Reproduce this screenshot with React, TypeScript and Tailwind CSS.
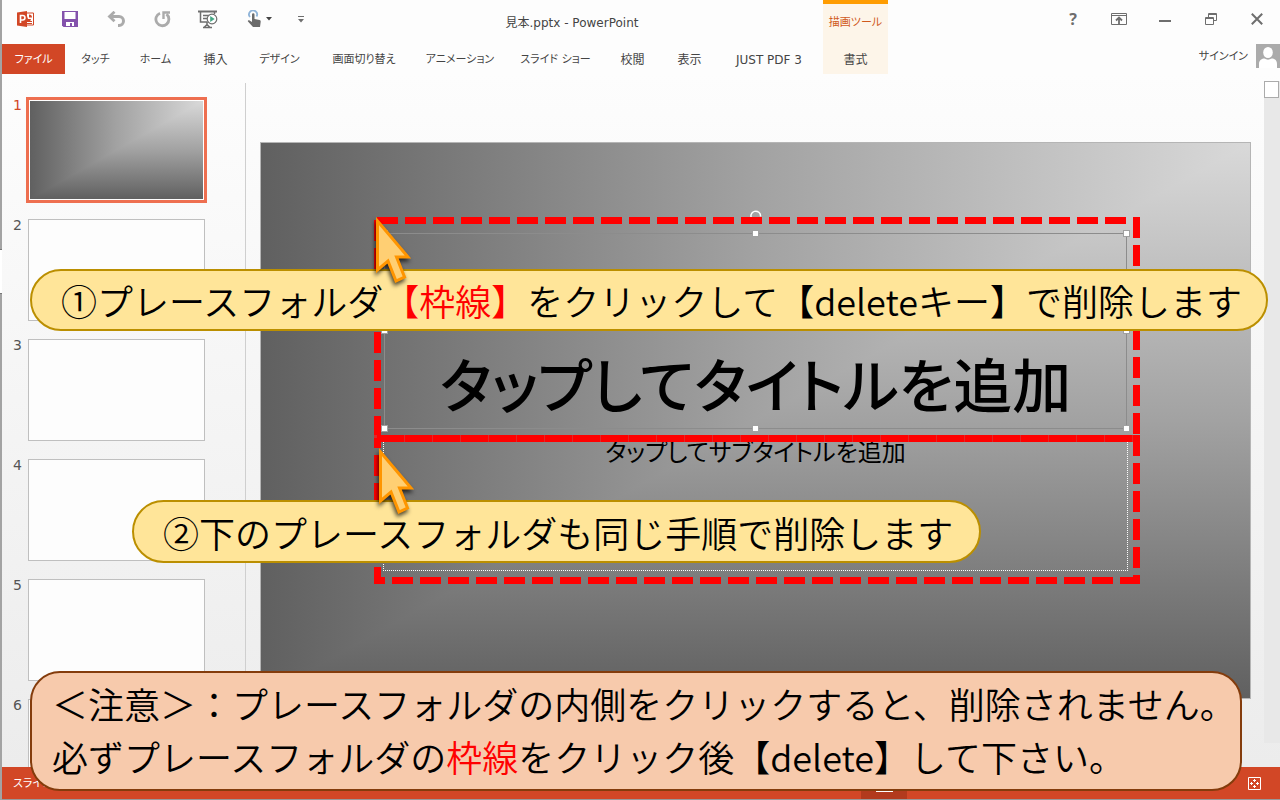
const quickButton = 'flex h-9 w-[46px] items-center justify-center';
const windowButton = 'flex h-9 w-[46px] items-center justify-center text-[#6e6e6e]';
const calloutText = "font-['Noto_Sans_CJK_JP',sans-serif] text-4xl font-[350] whitespace-nowrap text-black";
const slideFill =
  'bg-[linear-gradient(to_right,#606060,#a2a2a2_50%,#d9d9d9),linear-gradient(to_bottom,#d9d9d9,#a2a2a2_50%,#606060)] bg-blend-darken';

const tabs = [
  { label: 'タッチ', size: 'w-[57px] text-[11px]' },
  { label: 'ホーム', size: 'w-[63px] text-[11px]' },
  { label: '挿入', size: 'w-[57px] text-xs' },
  { label: 'デザイン', size: 'w-[71px] text-[11px]' },
  { label: '画面切り替え', size: 'w-[98px] text-[11px]' },
  { label: 'アニメーション', size: 'w-[94px] text-[11px]' },
  { label: 'スライド ショー', size: 'w-[97px] text-[11px]' },
  { label: '校閲', size: 'w-[57px] text-xs' },
  { label: '表示', size: 'w-[57px] text-xs' },
  { label: 'JUST PDF 3', size: 'w-[102px] text-xs' },
];

const slides = [1, 2, 3, 4, 5, 6];

const handles = [
  '-left-1 -top-1',
  'left-1/2 -ml-1 -top-1',
  '-right-1 -top-1',
  '-left-1 top-1/2 -mt-1',
  '-right-1 top-1/2 -mt-1',
  '-left-1 -bottom-1',
  'left-1/2 -ml-1 -bottom-1',
  '-right-1 -bottom-1',
];

function PowerPointIcon() {
  return (
    <svg width="17" height="16" viewBox="0 0 17 16">
      <path d="M9 2h7.500v12H9z" fill="#fff" stroke="#d24726" />
      <path d="M12 3.500v3h3a3 3 0 0 0-3-3zM10 5a3 3 0 1 0 4 3h-3z" fill="#d24726" />
      <path d="M9 10.500h6M9 12.500h6" stroke="#d24726" />
      <path d="M0 1.500 10 0v16L0 14.500z" fill="#d24726" />
      <path d="M3.500 12V4.500h2.200a2 2 0 0 1 0 4.500H3.500" fill="none" stroke="#fff" strokeWidth="1.600" />
    </svg>
  );
}

function SaveIcon() {
  return (
    <svg width="16" height="16" viewBox="0 0 16 16">
      <path d="M0 0h16v16H1.500L0 14.500z" fill="#8452ac" />
      <path d="M2.500 1h11v7h-11zM4 11h8v4h-2v-3H8v3H4z" fill="#fff" />
    </svg>
  );
}

function UndoIcon() {
  return (
    <svg width="19" height="16" viewBox="0 0 19 16" fill="none" stroke="#ababab">
      <path d="M3 5.500h9a4.500 4.500 0 0 1 0 9h-1" strokeWidth="3" />
      <path d="M7.500.8 2.500 5.500l5 4.700" strokeWidth="2.800" />
    </svg>
  );
}

function RepeatIcon() {
  return (
    <svg width="17" height="17" viewBox="0 0 17 17" fill="none" stroke="#ababab">
      <path d="M6 2.200a6.500 6.500 0 1 0 6.500 1" strokeWidth="2.800" />
      <path d="M9.500 8V1.500H16" strokeWidth="2.400" />
    </svg>
  );
}

function SlideShowIcon() {
  return (
    <svg width="20" height="19" viewBox="0 0 20 19" fill="none" stroke="#6e6e6e">
      <path d="M0 1.500h19" strokeWidth="2" />
      <path d="M2.500 2v10h7M16.500 2v2M5 5.500h6M5 8.500h4" strokeWidth="1.500" />
      <path d="M9 12v3M6 17.500l3-3 3 3M5 17.500h9" strokeWidth="1.500" />
      <circle cx="14" cy="9" r="4.800" fill="#fff" strokeWidth="1.200" />
      <path d="m12.200 6 4.500 3-4.500 3z" fill="#45a785" stroke="none" />
    </svg>
  );
}

function TouchIcon() {
  return (
    <svg width="15" height="18" viewBox="0 0 15 18">
      <path d="M3 7a4 4 0 1 1 6.500-.5" fill="none" stroke="#8fb4d9" strokeWidth="1.800" />
      <path
        d="M5 4.500a1.200 1.200 0 0 1 2.500 0V9l5 1c1 .2 1.300.8 1.200 1.700L13 17H6L1 11.500c-.6-.8.300-1.600 1.200-1.200L5 12z"
        fill="#6b6b6b"
      />
    </svg>
  );
}

function CursorArrow() {
  return (
    <svg
      width="44"
      height="72"
      viewBox="0 0 44 72"
      className="drop-shadow-[-1px_3px_2px_rgba(0,0,0,0.7)]"
    >
      <path
        d="M5.500 5 36 41H24.500l8 20-8.500 4-8-20L5.500 54z"
        fill="#ffcf73"
        stroke="#ff9500"
        strokeWidth="3"
      />
    </svg>
  );
}

// Dashed frames around the title and the subtitle placeholder
function PlaceholderFrames() {
  return (
    <svg
      width="768"
      height="368"
      viewBox="0 0 768 368"
      fill="none"
      stroke="#ff0000"
      strokeWidth="7"
      strokeDasharray="21 7"
      className="pointer-events-none absolute left-[112px] top-[73px]"
    >
      <path d="M4 4.500h760" />
      <path d="M4.500 4v218" />
      <path d="M763.500 1v220" />
      <path d="M1 222.500h762" stroke="#e02828" strokeDasharray="none" />
      <path d="M4 222.500h756" strokeDasharray="27 1" />
      <path d="M4.500 222v145" strokeDashoffset="11" />
      <path d="M763.500 219v149" />
      <path d="M1 364.500h766" strokeDashoffset="10" />
    </svg>
  );
}

function TitleBar() {
  return (
    <div className="flex h-11">
      <div className="flex w-[319px] shrink-0 pl-px pt-px">
        <button className="flex h-9 w-11 items-center justify-center" aria-label="PowerPoint">
          <PowerPointIcon />
        </button>
        <button className={quickButton} aria-label="上書き保存">
          <SaveIcon />
        </button>
        <button className={quickButton} aria-label="元に戻す">
          <UndoIcon />
        </button>
        <button className={quickButton} aria-label="繰り返し">
          <RepeatIcon />
        </button>
        <button className={quickButton} aria-label="先頭から開始">
          <SlideShowIcon />
        </button>
        <button className="flex h-9 w-14 items-center justify-center gap-1" aria-label="タッチ/マウス モードの切り替え">
          <TouchIcon />
          <svg width="6" height="4" viewBox="0 0 6 4">
            <path d="M0 0h6L3 3.500z" fill="#444" />
          </svg>
        </button>
        <button className="flex h-9 w-7 items-center justify-center" aria-label="クイック アクセス ツール バーのユーザー設定">
          <svg width="6" height="7" viewBox="0 0 6 7">
            <path d="M0 .5h6" stroke="#6e6e6e" />
            <path d="M0 3h6L3 6.500z" fill="#6e6e6e" />
          </svg>
        </button>
      </div>
      <h1 className="w-[502px] shrink-0 pt-3 text-center text-xs leading-[22px] text-[#444]">
        見本.pptx - PowerPoint
      </h1>
      <div className="w-[65px] shrink-0 whitespace-nowrap border-t-4 border-[#ff9c00] bg-[#fdf5e9] pt-2 text-center text-[11px] leading-[22px] text-[#d0591c]">
        描画ツール
      </div>
      <div className="flex flex-1 justify-end pt-px">
        <button className={windowButton} aria-label="ヘルプ">
          <span className="font-['Noto_Sans'] text-base font-bold">?</span>
        </button>
        <button className={windowButton} aria-label="リボンの表示オプション">
          <svg width="16" height="12" viewBox="0 0 16 12" fill="none" stroke="currentColor">
            <path d="M.5.500h15v11H.5zM.5 2.500h15" />
            <path d="M8 11V5M5 7.500l3-3 3 3" strokeWidth="1.800" />
          </svg>
        </button>
        <button className={windowButton} aria-label="最小化">
          <svg width="12" height="8" viewBox="0 0 12 8">
            <path d="M0 6h12" stroke="currentColor" strokeWidth="2" />
          </svg>
        </button>
        <button className={windowButton} aria-label="元のサイズに戻す">
          <svg width="12" height="12" viewBox="0 0 12 12" fill="none" stroke="currentColor">
            <path d="M.5 4.500h8v7h-8zM0 5.500h9M3.500 4V.5h8v7H9M3 1.500h9" />
          </svg>
        </button>
        <button className={windowButton} aria-label="閉じる">
          <svg width="12" height="12" viewBox="0 0 12 12" fill="none" stroke="currentColor" strokeWidth="2">
            <path d="m.8.8 10.400 10.400M11.200.8.8 11.200" />
          </svg>
        </button>
      </div>
    </div>
  );
}

function RibbonTabs() {
  return (
    <nav className="flex h-[30px] text-[#444]">
      <button className="w-[63px] shrink-0 bg-[#d24726] pt-0.5 text-[11px] text-white">ファイル</button>
      <div className="flex w-[758px] shrink-0 pl-0.5 pt-0.5">
        {tabs.map((tab) => (
          <button key={tab.label} className={`${tab.size} shrink-0 whitespace-nowrap`}>
            {tab.label}
          </button>
        ))}
      </div>
      <button className="w-[65px] shrink-0 bg-[#fdf5e9] pt-0.5 text-xs">書式</button>
      <div className="flex flex-1 items-start justify-end gap-2">
        <a href="#" className="text-[11px] leading-[26px]">
          サインイン
        </a>
        <svg width="24" height="24" viewBox="0 0 24 24" className="bg-[#ababab]">
          <ellipse cx="12" cy="8.500" rx="4.800" ry="5.500" fill="#fff" />
          <path d="M3 24v-4c0-4 3-5.500 5.500-5.500 2 1.500 5 1.500 7 0 3 0 5.500 1.500 5.500 5.500v4z" fill="#fff" />
        </svg>
      </div>
    </nav>
  );
}

function ThumbnailPane() {
  return (
    <aside className="mt-[9px] w-[244px] shrink-0 overflow-hidden border-r border-[#cfcfcf] pt-4">
      <ol>
        {slides.map((n) => (
          <li key={n} className="flex h-[120px] gap-1.5">
            <span
              className={`w-5 text-right text-sm leading-3 ${n === 1 ? 'text-[#d24726]' : 'text-[#555]'}`}
            >
              {n}
            </span>
            {n === 1 ? (
              <div className="-ml-0.5 -mt-0.5 h-[106px] w-[181px] border-[3px] border-[#ee6f50] bg-white p-px">
                <div className={`h-full ${slideFill}`} />
              </div>
            ) : (
              <div className="h-[102px] w-[177px] border border-[#bfbfbf] bg-[#fdfdfd]" />
            )}
          </li>
        ))}
      </ol>
    </aside>
  );
}

function Slide() {
  return (
    <section className={`relative aspect-[991/557] w-full border border-[#b5b5b5] pt-[90px] ${slideFill}`}>
      <div className="relative mx-[123px] flex h-[196px] items-end justify-center border border-[#8c8c8c]">
        <h2 className="whitespace-nowrap text-[59px] font-medium leading-[80px] text-black">
          タップしてタイトルを追加
        </h2>
        <svg width="12" height="20" viewBox="0 0 12 20" className="absolute -top-6 left-1/2 -ml-1.5">
          <path d="M2 9a4.800 4.800 0 1 1 8.500-2.500" fill="none" stroke="#fff" strokeWidth="1.500" />
        </svg>
        {handles.map((place) => (
          <span key={place} className={`absolute size-[7px] border border-[#a0a0a0] bg-white ${place}`} />
        ))}
      </div>
      <div className="mx-[122px] mt-2 h-[134px] border border-dotted border-white text-center">
        <p className="whitespace-nowrap text-2xl leading-[30px] text-black">タップしてサブタイトルを追加</p>
      </div>
      <PlaceholderFrames />
    </section>
  );
}

function ScrollBar() {
  return (
    <div className="mb-6 mt-[7px] w-4 shrink-0 bg-[#e8e8e8]">
      <div className="h-[17px] w-[15px] border border-[#ababab] bg-white" />
    </div>
  );
}

function StatusBar() {
  return (
    <footer className="flex h-[33px] shrink-0 items-center border-b border-[#999] bg-[#d24726] text-[11px] text-white">
      <span className="flex-1 pl-[11px] pt-0.5">スライド</span>
      <button className="flex h-full w-[46px] items-end justify-center bg-[#b23a1d] pb-[7px]" aria-label="標準">
        <span className="h-px w-[17px] bg-white" />
      </button>
      <div className="flex w-[373px] justify-end pr-[19px]">
        <button aria-label="ウィンドウのサイズに合わせる">
          <svg width="13" height="13" viewBox="0 0 13 13" fill="none" stroke="#fff">
            <path d="M.5.500h12v12H.5zM6.500 2v3M5 3.500h3M6.500 8v3M5 9.500h3M2 6.500h3M3.500 5v3M8 6.500h3M9.500 5v3" />
          </svg>
        </button>
      </div>
    </footer>
  );
}

export default function App() {
  return (
    <div className="relative flex h-screen overflow-hidden bg-[#fdfdfd] font-['DejaVu_Sans','Noto_Sans_CJK_JP',sans-serif]">
      <div className="flex w-0.5 shrink-0 flex-col bg-[#a3a3a3] pt-[249px]">
        <div className="h-[45px] border-y border-[#777] bg-white" />
      </div>
      <div className="flex min-w-0 flex-1 flex-col [font-feature-settings:'palt']">
        <header>
          <TitleBar />
          <RibbonTabs />
        </header>
        <div className="flex min-h-0 flex-1 bg-linear-to-b from-[#fdfdfd] to-[#ececec]">
          <ThumbnailPane />
          <main className="min-w-0 flex-1 overflow-hidden pl-[14px] pr-[13px] pt-[68px]">
            <Slide />
          </main>
          <ScrollBar />
        </div>
        <StatusBar />
      </div>

      <div
        className={`absolute left-[30px] right-3 top-[269px] flex h-[62px] items-center rounded-full border-2 border-[#bb8f00] bg-[#ffe599] pl-[29px] ${calloutText}`}
      >
        <p>
          ①プレースフォルダ<span className="text-[#ff0000]">【枠線】</span>をクリックして【deleteキー】で削除します
        </p>
      </div>
      <div
        className={`absolute left-[132px] top-[500px] flex h-[63px] items-center rounded-full border-2 border-[#bb8f00] bg-[#ffe599] pl-[29px] pr-[26px] ${calloutText}`}
      >
        <p>②下のプレースフォルダも同じ手順で削除します</p>
      </div>
      <div
        className={`absolute left-[30px] right-[38px] top-[671px] h-[120px] rounded-[30px] border-2 border-[#843c0c] bg-[#f7caac] pl-5 pt-1 ${calloutText}`}
      >
        <p className="leading-[53px]">＜注意＞：プレースフォルダの内側をクリックすると、削除されません。</p>
        <p className="leading-[53px]">
          必ずプレースフォルダの<span className="text-[#ff0000]">枠線</span>をクリック後【delete】して下さい。
        </p>
      </div>

      <div className="absolute left-[372px] top-[216px]">
        <CursorArrow />
      </div>
      <div className="absolute left-[375px] top-[447px]">
        <CursorArrow />
      </div>
    </div>
  );
}
